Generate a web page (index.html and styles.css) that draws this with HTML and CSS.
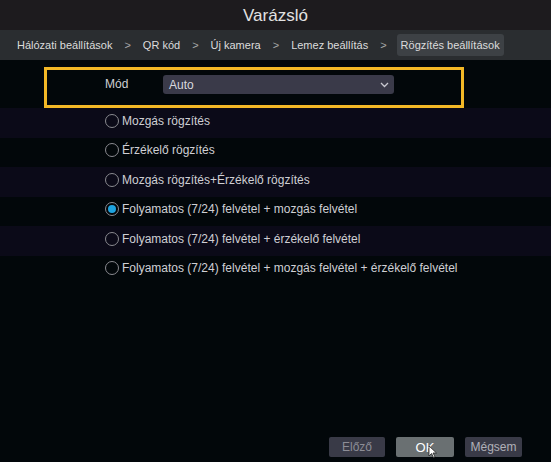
FILE: index.html
```html
<!DOCTYPE html>
<html>
<head>
<meta charset="utf-8">
<link rel="stylesheet" href="styles.css">
</head>
<body>
<div class="app">
  <header class="title">Varázsló</header>
  <nav class="crumbs">
    <span class="crumb">Hálózati beállítások</span><span class="sep">&gt;</span>
    <span class="crumb">QR kód</span><span class="sep">&gt;</span>
    <span class="crumb">Új kamera</span><span class="sep">&gt;</span>
    <span class="crumb">Lemez beállítás</span><span class="sep">&gt;</span>
    <span class="crumb active">Rögzítés beállítások</span>
  </nav>
  <main class="content">
    <div class="mode-box">
      <span class="mode-label">Mód</span>
      <div class="select">
        <span>Auto</span>
        <svg class="chev" width="9" height="6" viewBox="0 0 9 6"><path d="M1 1 L4.5 4.5 L8 1" fill="none" stroke="#c8c8d0" stroke-width="1.3"/></svg>
      </div>
    </div>
    <div class="rows">
      <div class="row stripe"><span class="radio"></span>Mozgás rögzítés</div>
      <div class="row"><span class="radio"></span>Érzékelő rögzítés</div>
      <div class="row stripe"><span class="radio"></span>Mozgás rögzítés+Érzékelő rögzítés</div>
      <div class="row"><span class="radio checked"></span>Folyamatos (7/24) felvétel + mozgás felvétel</div>
      <div class="row stripe"><span class="radio"></span>Folyamatos (7/24) felvétel + érzékelő felvétel</div>
      <div class="row"><span class="radio"></span>Folyamatos (7/24) felvétel + mozgás felvétel + érzékelő felvétel</div>
    </div>
  </main>
  <footer class="footer">
    <button class="btn">Előző</button>
    <button class="btn ok">OK<svg class="cursor" width="10" height="14" viewBox="0 0 10 14"><path d="M1 1 L1 11 L3.5 8.5 L5.5 12.5 L7 11.8 L5 8 L8.5 8 Z" fill="#fff" stroke="#222" stroke-width="0.8"/></svg></button>
    <button class="btn light">Mégsem</button>
  </footer>
</div>
</body>
</html>
```
FILE: styles.css
```css
* { box-sizing: border-box; }
html, body { margin: 0; padding: 0; }
body {
  background: #02070a;
  font-family: "Liberation Sans", Arial, sans-serif;
  color: #d0d0d4;
}
.app {
  width: 551px;
  height: 462px;
  display: flex;
  flex-direction: column;
  overflow: hidden;
}
.title {
  height: 30px;
  background: #1d1b1e;
  color: #e2e2e2;
  font-size: 17px;
  display: flex;
  align-items: center;
  justify-content: center;
  padding-top: 2px;
}
.crumbs {
  height: 30px;
  background: #2a2d30;
  display: flex;
  align-items: center;
  padding-left: 17px;
  font-size: 11px;
  color: #dcdcdc;
}
.sep {
  color: #a8a8a8;
  margin: 0 12px 0 12px;
}
.crumb.active {
  background: #3d4145;
  border-radius: 3px;
  padding: 5px 4px;
  margin-left: -2px;
}
.content {
  padding-top: 7px;
}
.mode-box {
  margin-left: 44px;
  width: 420px;
  height: 41px;
  border: 3px solid #f3b826;
  display: flex;
  align-items: flex-start;
  padding-top: 5px;
  padding-left: 58px;
  font-size: 12px;
}
.mode-label {
  width: 58px;
  line-height: 19px;
  color: #cfcfd4;
}
.select {
  width: 231px;
  height: 19px;
  background: #3a3a49;
  border-radius: 3px;
  display: flex;
  align-items: center;
  justify-content: space-between;
  padding: 0 5px 0 6px;
  color: #d8d8de;
  font-size: 12px;
}
.chev { margin-top: 1px; }
.rows {
  display: flex;
  flex-direction: column;
}
.row {
  height: 29.5px;
  display: flex;
  align-items: center;
  padding-left: 105px;
  padding-bottom: 4px;
  font-size: 12px;
  color: #cfcfd4;
}
.row.stripe { background: #0b0a18; }
.radio {
  width: 14px;
  height: 14px;
  border: 1.3px solid #8a8a90;
  border-radius: 50%;
  margin-right: 3px;
  display: flex;
  align-items: center;
  justify-content: center;
}
.radio.checked::after {
  content: "";
  width: 8px;
  height: 8px;
  border-radius: 50%;
  background: #1ea3df;
}
.footer {
  margin-top: auto;
  display: flex;
  justify-content: flex-end;
  gap: 11px;
  padding: 0 29px 5px 0;
}
.btn {
  width: 56px;
  height: 20px;
  border: none;
  border-radius: 2px;
  background: #393a47;
  color: #8d8d96;
  font-family: "Liberation Sans", Arial, sans-serif;
  font-size: 12px;
  padding: 0;
  position: relative;
}
.btn.ok {
  width: 58px;
  background: #6a7072;
  color: #ffffff;
  font-size: 13px;
}
.btn.light { color: #b0b0b8; width: 57px; }
.cursor {
  position: absolute;
  left: 32px;
  top: 8px;
}
```
